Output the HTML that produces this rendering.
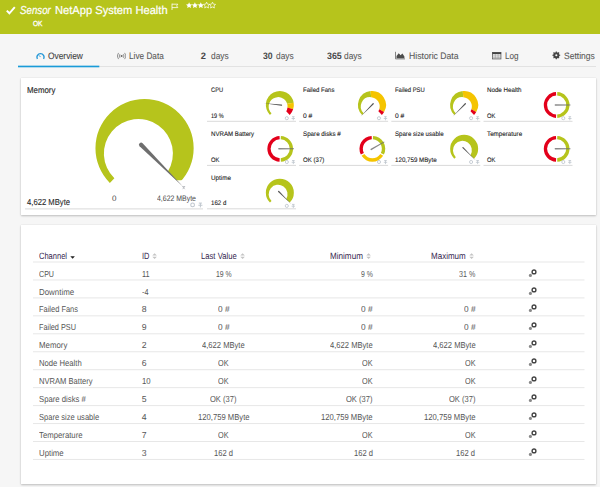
<!DOCTYPE html>
<html><head><meta charset="utf-8"><title>Sensor NetApp System Health</title>
<style>
*{box-sizing:border-box;margin:0;padding:0}
html,body{width:600px;height:487px;overflow:hidden;background:#f6f6f6;font-family:"Liberation Sans",sans-serif;color:#444}
.abs,.hdr,.panel,.hl,.rl,.t{position:absolute}
.t{line-height:1;white-space:nowrap;text-rendering:geometricPrecision;transform-origin:0 0;font-family:"Liberation Sans",sans-serif}
.hdr{left:0;top:0;width:600px;height:34px;background:#b6c41c}
.panel{background:#fff;box-shadow:0 1px 2px rgba(0,0,0,.22),0 0 1px rgba(0,0,0,.12)}
.hl{height:1px;background:#dcdcdc}
.rl{left:33px;width:551.5px;height:1px;background:#ececec}
</style></head><body>
<div class="hdr"></div>
<svg class="abs" style="left:6px;top:6px" width="10" height="9" viewBox="0 0 10 9"><path d="M0.8 4.6L3.4 7.3L8.8 1.2" fill="none" stroke="#fff" stroke-width="2"/></svg>
<div class="t" style="left:19.60px;top:6.00px;font-size:11.5px;color:#fff;transform:scaleX(0.845);font-style:italic;-webkit-text-stroke:0.2px #fff;">Sensor</div><div class="t" style="left:55.20px;top:6.00px;font-size:11.5px;color:#fff;transform:scaleX(0.968);-webkit-text-stroke:0.2px #fff;">NetApp System Health</div>
<svg class="abs" style="left:170.5px;top:3px" width="9" height="8" viewBox="0 0 9 8"><path d="M1 0.6V7M1 1.2H6.8L5.6 2.9L6.8 4.6H1" fill="none" stroke="#fff" stroke-width="0.8"/></svg>
<svg class="abs" style="left:185.6px;top:2.4px" width="32" height="8" viewBox="0 0 32 8"><path transform="translate(0.0,0)" d="M3.10 0.15L4.01 2.15L6.19 2.40L4.57 3.88L5.01 6.03L3.10 4.95L1.19 6.03L1.63 3.88L0.01 2.40L2.19 2.15Z" fill="#fff"/><path transform="translate(5.8,0)" d="M3.10 0.15L4.01 2.15L6.19 2.40L4.57 3.88L5.01 6.03L3.10 4.95L1.19 6.03L1.63 3.88L0.01 2.40L2.19 2.15Z" fill="#fff"/><path transform="translate(11.7,0)" d="M3.10 0.15L4.01 2.15L6.19 2.40L4.57 3.88L5.01 6.03L3.10 4.95L1.19 6.03L1.63 3.88L0.01 2.40L2.19 2.15Z" fill="#fff"/><path transform="translate(17.5,0)" d="M3.10 0.15L4.01 2.15L6.19 2.40L4.57 3.88L5.01 6.03L3.10 4.95L1.19 6.03L1.63 3.88L0.01 2.40L2.19 2.15Z" fill="none" stroke="#fff" stroke-width="0.7"/><path transform="translate(23.4,0)" d="M3.10 0.15L4.01 2.15L6.19 2.40L4.57 3.88L5.01 6.03L3.10 4.95L1.19 6.03L1.63 3.88L0.01 2.40L2.19 2.15Z" fill="none" stroke="#fff" stroke-width="0.7"/></svg>
<div class="t" style="left:33.10px;top:20.00px;font-size:7.4px;color:#fff;transform:scaleX(0.890);-webkit-text-stroke:0.3px #fff;">OK</div>
<div class="abs" style="left:18px;top:66.4px;width:578px;height:1px;background:#e2e2e2"></div>

<svg class="abs" style="left:35.6px;top:51.6px" width="9" height="8.1" viewBox="0 0 10 9"><path d="M1.6 7.6A3.9 3.9 0 1 1 8.4 7.6" fill="none" stroke="#2196d6" stroke-width="1.5"/><path d="M5 5.6L3.2 3.6" stroke="#2196d6" stroke-width="1"/></svg>
<svg class="abs" style="left:116.9px;top:52px" width="9.2" height="8" viewBox="0 0 10 8" preserveAspectRatio="none"><circle cx="5" cy="4" r="1.1" fill="#666"/><path d="M3.2 2.2A2.6 2.6 0 0 0 3.2 5.8M6.8 2.2A2.6 2.6 0 0 1 6.8 5.8M1.7 0.9A4.5 4.5 0 0 0 1.7 7.1M8.3 0.9A4.5 4.5 0 0 1 8.3 7.1" fill="none" stroke="#808080" stroke-width="0.9"/></svg>
<svg class="abs" style="left:395.2px;top:51.3px" width="10" height="9" viewBox="0 0 10 9"><path d="M0.5 0.8V7.9H10" fill="none" stroke="#777" stroke-width="0.9"/><path d="M1.5 7.2V5L3.7 2.2L5.6 4.3L7.4 2.6L9.4 5.4V7.2Z" fill="#4c4c4c"/></svg>
<svg class="abs" style="left:492.2px;top:51.6px" width="10" height="8" viewBox="0 0 10 8"><rect x="0.5" y="0.5" width="8.4" height="6.4" fill="none" stroke="#666" stroke-width="0.9"/><path d="M0.3 1.2H9.1" stroke="#444" stroke-width="1.9"/><path d="M0.5 3.9H9M0.5 5.4H9M3.3 2V7M6.1 2V7" stroke="#999" stroke-width="0.6"/></svg>
<svg class="abs" style="left:552.3px;top:51.3px" width="8.6" height="8.6" viewBox="0 0 9 9"><circle cx="4.5" cy="4.5" r="2.4" fill="none" stroke="#444" stroke-width="1.7"/><path d="M4.5 0.4V8.6M0.4 4.5H8.6M1.6 1.6L7.4 7.4M7.4 1.6L1.6 7.4" stroke="#444" stroke-width="1.2"/><circle cx="4.5" cy="4.5" r="1.1" fill="#f6f6f6"/></svg>
<div class="t" style="left:47.80px;top:52.00px;font-size:9.3px;color:#444;transform:scaleX(0.901);-webkit-text-stroke:0.1px #444;">Overview</div><div class="t" style="left:129.20px;top:52.00px;font-size:9.3px;color:#585858;transform:scaleX(0.886);-webkit-text-stroke:0.08px #585858;">Live Data</div><div class="t" style="left:200.70px;top:52.00px;font-size:9.3px;color:#484848;font-weight:bold;">2</div><div class="t" style="left:211.20px;top:52.00px;font-size:9.3px;color:#585858;transform:scaleX(0.896);-webkit-text-stroke:0.08px #585858;">days</div><div class="t" style="left:263.20px;top:52.00px;font-size:9.3px;color:#484848;transform:scaleX(0.928);font-weight:bold;">30</div><div class="t" style="left:276.20px;top:52.00px;font-size:9.3px;color:#585858;transform:scaleX(0.896);-webkit-text-stroke:0.08px #585858;">days</div><div class="t" style="left:326.80px;top:52.00px;font-size:9.3px;color:#484848;transform:scaleX(0.954);font-weight:bold;">365</div><div class="t" style="left:344.20px;top:52.00px;font-size:9.3px;color:#585858;transform:scaleX(0.896);-webkit-text-stroke:0.08px #585858;">days</div><div class="t" style="left:408.80px;top:52.00px;font-size:9.3px;color:#585858;transform:scaleX(0.932);-webkit-text-stroke:0.08px #585858;">Historic Data</div><div class="t" style="left:504.80px;top:52.00px;font-size:9.3px;color:#585858;transform:scaleX(0.877);-webkit-text-stroke:0.08px #585858;">Log</div><div class="t" style="left:563.80px;top:52.00px;font-size:9.3px;color:#585858;transform:scaleX(0.917);-webkit-text-stroke:0.08px #585858;">Settings</div>
<div class="panel" style="left:20.6px;top:77.5px;width:575.8px;height:137.5px"></div>
<div class="t" style="left:26.70px;top:86.00px;font-size:8.7px;color:#2b2b2b;transform:scaleX(0.905);-webkit-text-stroke:0.15px #2b2b2b;">Memory</div>
<div class="t" style="left:26.90px;top:198.00px;font-size:8.7px;color:#2b2b2b;transform:scaleX(0.882);-webkit-text-stroke:0.1px #2b2b2b;">4,622 MByte</div>
<div class="t" style="left:111.90px;top:195.00px;font-size:8px;color:#4a4a4a;">0</div>
<div class="t" style="left:156.90px;top:195.00px;font-size:8px;color:#4a4a4a;transform:scaleX(0.868);">4,622 MByte</div>

<div class="t" style="left:210.90px;top:88.00px;font-size:6.6px;color:#1a1a1a;transform:scaleX(0.868);-webkit-text-stroke:0.1px #1a1a1a;">CPU</div>
<div class="t" style="left:210.90px;top:114.00px;font-size:6.6px;color:#1a1a1a;transform:scaleX(0.842);-webkit-text-stroke:0.1px #1a1a1a;">19 %</div>
<div class="t" style="left:303.05px;top:88.00px;font-size:6.6px;color:#1a1a1a;transform:scaleX(0.912);-webkit-text-stroke:0.1px #1a1a1a;">Failed Fans</div>
<div class="t" style="left:303.05px;top:114.00px;font-size:6.6px;color:#1a1a1a;transform:scaleX(1.011);-webkit-text-stroke:0.1px #1a1a1a;">0 #</div>
<div class="t" style="left:395.20px;top:88.00px;font-size:6.6px;color:#1a1a1a;transform:scaleX(0.894);-webkit-text-stroke:0.1px #1a1a1a;">Failed PSU</div>
<div class="t" style="left:395.20px;top:114.00px;font-size:6.6px;color:#1a1a1a;transform:scaleX(1.011);-webkit-text-stroke:0.1px #1a1a1a;">0 #</div>
<div class="t" style="left:487.35px;top:88.00px;font-size:6.6px;color:#1a1a1a;transform:scaleX(0.939);-webkit-text-stroke:0.1px #1a1a1a;">Node Health</div>
<div class="t" style="left:487.35px;top:114.00px;font-size:6.6px;color:#1a1a1a;transform:scaleX(0.888);-webkit-text-stroke:0.1px #1a1a1a;">OK</div>
<div class="t" style="left:210.90px;top:132.00px;font-size:6.6px;color:#1a1a1a;transform:scaleX(0.928);-webkit-text-stroke:0.1px #1a1a1a;">NVRAM Battery</div>
<div class="t" style="left:210.90px;top:158.00px;font-size:6.6px;color:#1a1a1a;transform:scaleX(0.888);-webkit-text-stroke:0.1px #1a1a1a;">OK</div>
<div class="t" style="left:303.05px;top:132.00px;font-size:6.6px;color:#1a1a1a;transform:scaleX(0.944);-webkit-text-stroke:0.1px #1a1a1a;">Spare disks #</div>
<div class="t" style="left:303.05px;top:158.00px;font-size:6.6px;color:#1a1a1a;transform:scaleX(0.922);-webkit-text-stroke:0.1px #1a1a1a;">OK (37)</div>
<div class="t" style="left:395.20px;top:132.00px;font-size:6.6px;color:#1a1a1a;transform:scaleX(0.926);-webkit-text-stroke:0.1px #1a1a1a;">Spare size usable</div>
<div class="t" style="left:395.20px;top:158.00px;font-size:6.6px;color:#1a1a1a;transform:scaleX(0.938);-webkit-text-stroke:0.1px #1a1a1a;">120,759 MByte</div>
<div class="t" style="left:487.35px;top:132.00px;font-size:6.6px;color:#1a1a1a;transform:scaleX(0.949);-webkit-text-stroke:0.1px #1a1a1a;">Temperature</div>
<div class="t" style="left:487.35px;top:158.00px;font-size:6.6px;color:#1a1a1a;transform:scaleX(0.888);-webkit-text-stroke:0.1px #1a1a1a;">OK</div>
<div class="t" style="left:210.90px;top:176.00px;font-size:6.6px;color:#1a1a1a;transform:scaleX(0.953);-webkit-text-stroke:0.1px #1a1a1a;">Uptime</div>
<div class="t" style="left:210.90px;top:201.00px;font-size:6.6px;color:#1a1a1a;transform:scaleX(0.928);-webkit-text-stroke:0.1px #1a1a1a;">162 d</div>
<div class="panel" style="left:20.6px;top:225px;width:575.8px;height:258.5px"></div>
<svg class="abs" style="left:0;top:0" width="600" height="487" viewBox="0 0 600 487">
<clipPath id="bc"><path d="M0 0H600V180.3H150V300H0Z"/></clipPath><g clip-path="url(#bc)"><path d="M109.84 182.88A49.10 49.10 0 1 1 179.28 182.88L167.87 171.47A34.52 34.52 0 1 0 114.39 178.33Z" fill="#b6c41c"/></g>
<path d="M139.57 146.21A2.15 2.15 0 0 1 142.61 143.17L183.10 186.70L183.10 186.70Z" fill="#6e6e6e" opacity="1"/>
<circle cx="192.60" cy="204.90" r="1.86" fill="none" stroke="#bec5cd" stroke-width="1.02"/><path d="M198.84 203.10h3.12M200.40 203.10v4.32M198.36 205.26h4.08" stroke="#bec5cd" stroke-width="0.96" fill="none"/>
<path d="M182.6 186.6l2.2 2.6M184.8 186.6l-2.2 2.6M182.4 186.5h2.6" stroke="#8a8f96" stroke-width="0.5" fill="none"/>
<path d="M269.95 114.90A14.00 14.00 0 1 1 293.68 102.81L287.15 103.84A9.45 9.45 0 1 0 271.52 113.33Z" fill="#b6c41c"/>
<path d="M293.68 102.81A14.00 14.00 0 0 1 293.16 109.33L287.49 107.48A9.45 9.45 0 0 0 287.15 103.84Z" fill="#f5c400"/>
<path d="M293.16 109.33A14.00 14.00 0 0 1 289.75 114.90L286.21 111.36A9.45 9.45 0 0 0 287.49 107.48Z" fill="#e3001b"/>
<path d="M281.59 104.54A0.65 0.65 0 0 1 281.45 105.83L263.85 103.23L263.85 103.23Z" fill="#555" opacity="1"/>
<circle cx="286.80" cy="118.20" r="1.55" fill="none" stroke="#bec5cd" stroke-width="0.85"/><path d="M292.00 116.70h2.60M293.30 116.70v3.60M291.60 118.50h3.40" stroke="#bec5cd" stroke-width="0.80" fill="none"/>
<path d="M362.10 114.90A14.00 14.00 0 0 1 370.55 91.08L371.18 97.13A9.45 9.45 0 0 0 363.67 113.33Z" fill="#b6c41c"/>
<path d="M370.55 91.08A14.00 14.00 0 0 1 384.07 112.09L379.28 109.28A9.45 9.45 0 0 0 371.18 97.13Z" fill="#f5c400"/>
<path d="M384.07 112.09A14.00 14.00 0 0 1 381.90 114.90L378.36 111.36A9.45 9.45 0 0 0 379.28 109.28Z" fill="#e3001b"/>
<path d="M372.73 103.35A0.65 0.65 0 0 1 373.65 104.27L360.62 116.38L360.62 116.38Z" fill="#555" opacity="1"/>
<circle cx="378.95" cy="118.20" r="1.55" fill="none" stroke="#bec5cd" stroke-width="0.85"/><path d="M384.15 116.70h2.60M385.45 116.70v3.60M383.75 118.50h3.40" stroke="#bec5cd" stroke-width="0.80" fill="none"/>
<path d="M454.25 114.90A14.00 14.00 0 0 1 462.70 91.08L463.33 97.13A9.45 9.45 0 0 0 455.82 113.33Z" fill="#b6c41c"/>
<path d="M462.70 91.08A14.00 14.00 0 0 1 476.22 112.09L471.43 109.28A9.45 9.45 0 0 0 463.33 97.13Z" fill="#f5c400"/>
<path d="M476.22 112.09A14.00 14.00 0 0 1 474.05 114.90L470.51 111.36A9.45 9.45 0 0 0 471.43 109.28Z" fill="#e3001b"/>
<path d="M464.88 103.35A0.65 0.65 0 0 1 465.80 104.27L452.77 116.38L452.77 116.38Z" fill="#555" opacity="1"/>
<circle cx="471.10" cy="118.20" r="1.55" fill="none" stroke="#bec5cd" stroke-width="0.85"/><path d="M476.30 116.70h2.60M477.60 116.70v3.60M475.90 118.50h3.40" stroke="#bec5cd" stroke-width="0.80" fill="none"/>
<path d="M555.97 117.88A12.90 12.90 0 0 1 555.97 92.12L556.15 95.51A9.50 9.50 0 0 0 556.15 114.49Z" fill="#e3001b"/>
<path d="M557.33 92.12A12.90 12.90 0 0 1 557.33 117.88L557.15 114.49A9.50 9.50 0 0 0 557.15 95.51Z" fill="#b6c41c"/>
<path d="M555.35 105.75A0.75 0.75 0 0 1 555.35 104.25L570.43 104.55L570.43 105.45Z" fill="#6a6a6a" opacity="0.8"/>
<circle cx="563.30" cy="118.20" r="1.55" fill="none" stroke="#bec5cd" stroke-width="0.85"/><path d="M568.50 116.70h2.60M569.80 116.70v3.60M568.10 118.50h3.40" stroke="#bec5cd" stroke-width="0.80" fill="none"/>
<path d="M279.52 161.68A12.90 12.90 0 0 1 279.52 135.92L279.70 139.31A9.50 9.50 0 0 0 279.70 158.29Z" fill="#e3001b"/>
<path d="M280.88 135.92A12.90 12.90 0 0 1 280.88 161.68L280.70 158.29A9.50 9.50 0 0 0 280.70 139.31Z" fill="#b6c41c"/>
<path d="M278.90 149.55A0.75 0.75 0 0 1 278.90 148.05L293.98 148.35L293.98 149.25Z" fill="#6a6a6a" opacity="0.8"/>
<circle cx="286.85" cy="162.00" r="1.55" fill="none" stroke="#bec5cd" stroke-width="0.85"/><path d="M292.05 160.50h2.60M293.35 160.50v3.60M291.65 162.30h3.40" stroke="#bec5cd" stroke-width="0.80" fill="none"/>
<path d="M360.84 154.62A12.90 12.90 0 0 1 371.63 135.92L371.82 139.31A9.50 9.50 0 0 0 363.87 153.08Z" fill="#e3001b"/>
<path d="M373.07 135.92A12.90 12.90 0 0 1 383.86 154.62L380.83 153.08A9.50 9.50 0 0 0 372.88 139.31Z" fill="#b6c41c"/>
<path d="M383.14 155.86A12.90 12.90 0 0 1 361.56 155.86L364.40 154.00A9.50 9.50 0 0 0 380.30 154.00Z" fill="#f5c400"/>
<path d="M371.60 150.10A0.75 0.75 0 0 1 370.85 148.80L384.06 141.52L384.51 142.30Z" fill="#6a6a6a" opacity="0.8"/>
<circle cx="379.00" cy="162.00" r="1.55" fill="none" stroke="#bec5cd" stroke-width="0.85"/><path d="M384.20 160.50h2.60M385.50 160.50v3.60M383.80 162.30h3.40" stroke="#bec5cd" stroke-width="0.80" fill="none"/>
<path d="M454.25 158.70A14.00 14.00 0 1 1 474.05 158.70L470.51 155.16A9.45 9.45 0 1 0 455.82 157.13Z" fill="#b6c41c"/>
<path d="M462.50 148.07A0.65 0.65 0 0 1 463.42 147.15L475.53 160.18L475.53 160.18Z" fill="#555" opacity="1"/>
<circle cx="471.10" cy="162.00" r="1.55" fill="none" stroke="#bec5cd" stroke-width="0.85"/><path d="M476.30 160.50h2.60M477.60 160.50v3.60M475.90 162.30h3.40" stroke="#bec5cd" stroke-width="0.80" fill="none"/>
<path d="M555.97 161.68A12.90 12.90 0 0 1 555.97 135.92L556.15 139.31A9.50 9.50 0 0 0 556.15 158.29Z" fill="#e3001b"/>
<path d="M557.33 135.92A12.90 12.90 0 0 1 557.33 161.68L557.15 158.29A9.50 9.50 0 0 0 557.15 139.31Z" fill="#b6c41c"/>
<path d="M555.35 149.55A0.75 0.75 0 0 1 555.35 148.05L570.43 148.35L570.43 149.25Z" fill="#6a6a6a" opacity="0.8"/>
<circle cx="563.30" cy="162.00" r="1.55" fill="none" stroke="#bec5cd" stroke-width="0.85"/><path d="M568.50 160.50h2.60M569.80 160.50v3.60M568.10 162.30h3.40" stroke="#bec5cd" stroke-width="0.80" fill="none"/>
<path d="M269.95 202.60A14.00 14.00 0 1 1 289.75 202.60L286.21 199.06A9.45 9.45 0 1 0 271.52 201.03Z" fill="#b6c41c"/>
<path d="M278.20 191.97A0.65 0.65 0 0 1 279.12 191.05L291.23 204.08L291.23 204.08Z" fill="#555" opacity="1"/>
<circle cx="286.80" cy="205.90" r="1.55" fill="none" stroke="#bec5cd" stroke-width="0.85"/><path d="M292.00 204.40h2.60M293.30 204.40v3.60M291.60 206.20h3.40" stroke="#bec5cd" stroke-width="0.80" fill="none"/>
<rect x="207.0" y="120.80" width="89" height="1" fill="#dadada"/>
<rect x="299.1" y="120.80" width="89" height="1" fill="#dadada"/>
<rect x="391.3" y="120.80" width="89" height="1" fill="#dadada"/>
<rect x="483.5" y="120.80" width="89" height="1" fill="#dadada"/>
<rect x="207.0" y="164.90" width="89" height="1" fill="#dadada"/>
<rect x="299.1" y="164.90" width="89" height="1" fill="#dadada"/>
<rect x="391.3" y="164.90" width="89" height="1" fill="#dadada"/>
<rect x="483.5" y="164.90" width="89" height="1" fill="#dadada"/>
<rect x="207.0" y="208.30" width="89" height="1" fill="#dadada"/>
<rect x="33" y="261.50" width="551.5" height="1" fill="#e7e7e7"/>
<rect x="33" y="279.45" width="551.5" height="1" fill="#e7e7e7"/>
<rect x="33" y="297.40" width="551.5" height="1" fill="#e7e7e7"/>
<rect x="33" y="315.35" width="551.5" height="1" fill="#e7e7e7"/>
<rect x="33" y="333.30" width="551.5" height="1" fill="#e7e7e7"/>
<rect x="33" y="351.25" width="551.5" height="1" fill="#e7e7e7"/>
<rect x="33" y="369.20" width="551.5" height="1" fill="#e7e7e7"/>
<rect x="33" y="387.15" width="551.5" height="1" fill="#e7e7e7"/>
<rect x="33" y="405.10" width="551.5" height="1" fill="#e7e7e7"/>
<rect x="33" y="423.05" width="551.5" height="1" fill="#e7e7e7"/>
<rect x="33" y="441.00" width="551.5" height="1" fill="#e7e7e7"/>
<rect x="33" y="458.95" width="551.5" height="1" fill="#e7e7e7"/>
<rect x="25" y="208.4" width="178" height="1" fill="#dadada"/>
<rect x="18" y="65.65" width="81.3" height="1.65" fill="#1a9bd8"/>
</svg>
<div class="t" style="left:38.70px;top:252.00px;font-size:9.1px;color:#35264f;transform:scaleX(0.827);">Channel</div><svg class="abs" style="left:69.9px;top:256px" width="5.2" height="3" viewBox="0 0 5 3"><path d="M0.2 0.2H4.8L2.5 2.8Z" fill="#222"/></svg><div class="t" style="left:141.60px;top:252.00px;font-size:9.1px;color:#35264f;transform:scaleX(0.814);">ID</div><svg class="abs" style="left:152.0px;top:252.6px" width="5.2" height="6.2" viewBox="0 0 5 6" preserveAspectRatio="none"><path d="M0.3 2.4L2.5 0.2L4.7 2.4ZM0.3 3.6L2.5 5.8L4.7 3.6Z" fill="#c4c4c4"/></svg><div class="t" style="left:200.90px;top:252.00px;font-size:9.1px;color:#35264f;transform:scaleX(0.844);">Last Value</div><svg class="abs" style="left:239.6px;top:252.6px" width="5.2" height="6.2" viewBox="0 0 5 6" preserveAspectRatio="none"><path d="M0.3 2.4L2.5 0.2L4.7 2.4ZM0.3 3.6L2.5 5.8L4.7 3.6Z" fill="#c4c4c4"/></svg><div class="t" style="left:329.80px;top:252.00px;font-size:9.1px;color:#35264f;transform:scaleX(0.892);">Minimum</div><svg class="abs" style="left:365.8px;top:252.6px" width="5.2" height="6.2" viewBox="0 0 5 6" preserveAspectRatio="none"><path d="M0.3 2.4L2.5 0.2L4.7 2.4ZM0.3 3.6L2.5 5.8L4.7 3.6Z" fill="#c4c4c4"/></svg><div class="t" style="left:431.30px;top:252.00px;font-size:9.1px;color:#35264f;transform:scaleX(0.881);">Maximum</div><svg class="abs" style="left:468.8px;top:252.6px" width="5.2" height="6.2" viewBox="0 0 5 6" preserveAspectRatio="none"><path d="M0.3 2.4L2.5 0.2L4.7 2.4ZM0.3 3.6L2.5 5.8L4.7 3.6Z" fill="#c4c4c4"/></svg>
<div class="t" style="left:38.70px;top:270.00px;font-size:8.7px;color:#565656;transform:scaleX(0.818);">CPU</div>
<div class="t" style="left:141.70px;top:270.00px;font-size:8.7px;color:#565656;transform:scaleX(0.843);">11</div>
<div class="t" style="left:215.55px;top:270.00px;font-size:8.7px;color:#565656;transform:scaleX(0.793);">19 %</div>
<div class="t" style="left:360.60px;top:270.00px;font-size:8.7px;color:#565656;transform:scaleX(0.795);">9 %</div>
<div class="t" style="left:459.00px;top:270.00px;font-size:8.7px;color:#565656;transform:scaleX(0.823);">31 %</div>
<svg class="abs" style="left:527.85px;top:268.55px" width="10" height="9" viewBox="0 0 10 9"><circle cx="6" cy="2.9" r="1.9" fill="none" stroke="#444" stroke-width="1.4"/><circle cx="2.4" cy="6.4" r="1.55" fill="#888"/></svg>
<div class="t" style="left:38.70px;top:288.00px;font-size:8.7px;color:#565656;transform:scaleX(0.909);">Downtime</div>
<div class="t" style="left:141.70px;top:288.00px;font-size:8.7px;color:#565656;transform:scaleX(0.841);">-4</div>
<svg class="abs" style="left:527.85px;top:286.50px" width="10" height="9" viewBox="0 0 10 9"><circle cx="6" cy="2.9" r="1.9" fill="none" stroke="#444" stroke-width="1.4"/><circle cx="2.4" cy="6.4" r="1.55" fill="#888"/></svg>
<div class="t" style="left:38.70px;top:305.00px;font-size:8.7px;color:#565656;transform:scaleX(0.859);">Failed Fans</div>
<div class="t" style="left:141.70px;top:305.00px;font-size:8.7px;color:#565656;">8</div>
<div class="t" style="left:217.65px;top:305.00px;font-size:8.7px;color:#565656;transform:scaleX(0.952);">0 #</div>
<div class="t" style="left:361.00px;top:305.00px;font-size:8.7px;color:#565656;transform:scaleX(0.952);">0 #</div>
<div class="t" style="left:463.80px;top:305.00px;font-size:8.7px;color:#565656;transform:scaleX(0.952);">0 #</div>
<svg class="abs" style="left:527.85px;top:304.45px" width="10" height="9" viewBox="0 0 10 9"><circle cx="6" cy="2.9" r="1.9" fill="none" stroke="#444" stroke-width="1.4"/><circle cx="2.4" cy="6.4" r="1.55" fill="#888"/></svg>
<div class="t" style="left:38.70px;top:323.00px;font-size:8.7px;color:#565656;transform:scaleX(0.842);">Failed PSU</div>
<div class="t" style="left:141.70px;top:323.00px;font-size:8.7px;color:#565656;">9</div>
<div class="t" style="left:217.65px;top:323.00px;font-size:8.7px;color:#565656;transform:scaleX(0.952);">0 #</div>
<div class="t" style="left:361.00px;top:323.00px;font-size:8.7px;color:#565656;transform:scaleX(0.952);">0 #</div>
<div class="t" style="left:463.80px;top:323.00px;font-size:8.7px;color:#565656;transform:scaleX(0.952);">0 #</div>
<svg class="abs" style="left:527.85px;top:322.40px" width="10" height="9" viewBox="0 0 10 9"><circle cx="6" cy="2.9" r="1.9" fill="none" stroke="#444" stroke-width="1.4"/><circle cx="2.4" cy="6.4" r="1.55" fill="#888"/></svg>
<div class="t" style="left:38.70px;top:341.00px;font-size:8.7px;color:#565656;transform:scaleX(0.902);">Memory</div>
<div class="t" style="left:141.70px;top:341.00px;font-size:8.7px;color:#565656;">2</div>
<div class="t" style="left:202.05px;top:341.00px;font-size:8.7px;color:#565656;transform:scaleX(0.875);">4,622 MByte</div>
<div class="t" style="left:329.80px;top:341.00px;font-size:8.7px;color:#565656;transform:scaleX(0.875);">4,622 MByte</div>
<div class="t" style="left:432.60px;top:341.00px;font-size:8.7px;color:#565656;transform:scaleX(0.875);">4,622 MByte</div>
<svg class="abs" style="left:527.85px;top:340.35px" width="10" height="9" viewBox="0 0 10 9"><circle cx="6" cy="2.9" r="1.9" fill="none" stroke="#444" stroke-width="1.4"/><circle cx="2.4" cy="6.4" r="1.55" fill="#888"/></svg>
<div class="t" style="left:38.70px;top:359.00px;font-size:8.7px;color:#565656;transform:scaleX(0.884);">Node Health</div>
<div class="t" style="left:141.70px;top:359.00px;font-size:8.7px;color:#565656;">6</div>
<div class="t" style="left:218.15px;top:359.00px;font-size:8.7px;color:#565656;transform:scaleX(0.837);">OK</div>
<div class="t" style="left:362.00px;top:359.00px;font-size:8.7px;color:#565656;transform:scaleX(0.837);">OK</div>
<div class="t" style="left:464.80px;top:359.00px;font-size:8.7px;color:#565656;transform:scaleX(0.837);">OK</div>
<svg class="abs" style="left:527.85px;top:358.30px" width="10" height="9" viewBox="0 0 10 9"><circle cx="6" cy="2.9" r="1.9" fill="none" stroke="#444" stroke-width="1.4"/><circle cx="2.4" cy="6.4" r="1.55" fill="#888"/></svg>
<div class="t" style="left:38.70px;top:377.00px;font-size:8.7px;color:#565656;transform:scaleX(0.874);">NVRAM Battery</div>
<div class="t" style="left:141.70px;top:377.00px;font-size:8.7px;color:#565656;transform:scaleX(0.890);">10</div>
<div class="t" style="left:218.15px;top:377.00px;font-size:8.7px;color:#565656;transform:scaleX(0.837);">OK</div>
<div class="t" style="left:362.00px;top:377.00px;font-size:8.7px;color:#565656;transform:scaleX(0.837);">OK</div>
<div class="t" style="left:464.80px;top:377.00px;font-size:8.7px;color:#565656;transform:scaleX(0.837);">OK</div>
<svg class="abs" style="left:527.85px;top:376.25px" width="10" height="9" viewBox="0 0 10 9"><circle cx="6" cy="2.9" r="1.9" fill="none" stroke="#444" stroke-width="1.4"/><circle cx="2.4" cy="6.4" r="1.55" fill="#888"/></svg>
<div class="t" style="left:38.70px;top:395.00px;font-size:8.7px;color:#565656;transform:scaleX(0.889);">Spare disks #</div>
<div class="t" style="left:141.70px;top:395.00px;font-size:8.7px;color:#565656;">5</div>
<div class="t" style="left:210.20px;top:395.00px;font-size:8.7px;color:#565656;transform:scaleX(0.868);">OK (37)</div>
<div class="t" style="left:346.10px;top:395.00px;font-size:8.7px;color:#565656;transform:scaleX(0.868);">OK (37)</div>
<div class="t" style="left:448.90px;top:395.00px;font-size:8.7px;color:#565656;transform:scaleX(0.868);">OK (37)</div>
<svg class="abs" style="left:527.85px;top:394.20px" width="10" height="9" viewBox="0 0 10 9"><circle cx="6" cy="2.9" r="1.9" fill="none" stroke="#444" stroke-width="1.4"/><circle cx="2.4" cy="6.4" r="1.55" fill="#888"/></svg>
<div class="t" style="left:38.70px;top:413.00px;font-size:8.7px;color:#565656;transform:scaleX(0.872);">Spare size usable</div>
<div class="t" style="left:141.70px;top:413.00px;font-size:8.7px;color:#565656;">4</div>
<div class="t" style="left:197.60px;top:413.00px;font-size:8.7px;color:#565656;transform:scaleX(0.883);">120,759 MByte</div>
<div class="t" style="left:320.90px;top:413.00px;font-size:8.7px;color:#565656;transform:scaleX(0.883);">120,759 MByte</div>
<div class="t" style="left:423.70px;top:413.00px;font-size:8.7px;color:#565656;transform:scaleX(0.883);">120,759 MByte</div>
<svg class="abs" style="left:527.85px;top:412.15px" width="10" height="9" viewBox="0 0 10 9"><circle cx="6" cy="2.9" r="1.9" fill="none" stroke="#444" stroke-width="1.4"/><circle cx="2.4" cy="6.4" r="1.55" fill="#888"/></svg>
<div class="t" style="left:38.70px;top:431.00px;font-size:8.7px;color:#565656;transform:scaleX(0.894);">Temperature</div>
<div class="t" style="left:141.70px;top:431.00px;font-size:8.7px;color:#565656;">7</div>
<div class="t" style="left:218.15px;top:431.00px;font-size:8.7px;color:#565656;transform:scaleX(0.837);">OK</div>
<div class="t" style="left:362.00px;top:431.00px;font-size:8.7px;color:#565656;transform:scaleX(0.837);">OK</div>
<div class="t" style="left:464.80px;top:431.00px;font-size:8.7px;color:#565656;transform:scaleX(0.837);">OK</div>
<svg class="abs" style="left:527.85px;top:430.10px" width="10" height="9" viewBox="0 0 10 9"><circle cx="6" cy="2.9" r="1.9" fill="none" stroke="#444" stroke-width="1.4"/><circle cx="2.4" cy="6.4" r="1.55" fill="#888"/></svg>
<div class="t" style="left:38.70px;top:449.00px;font-size:8.7px;color:#565656;transform:scaleX(0.898);">Uptime</div>
<div class="t" style="left:141.70px;top:449.00px;font-size:8.7px;color:#565656;">3</div>
<div class="t" style="left:213.90px;top:449.00px;font-size:8.7px;color:#565656;transform:scaleX(0.874);">162 d</div>
<div class="t" style="left:353.50px;top:449.00px;font-size:8.7px;color:#565656;transform:scaleX(0.874);">162 d</div>
<div class="t" style="left:456.30px;top:449.00px;font-size:8.7px;color:#565656;transform:scaleX(0.874);">162 d</div>
<svg class="abs" style="left:527.85px;top:448.05px" width="10" height="9" viewBox="0 0 10 9"><circle cx="6" cy="2.9" r="1.9" fill="none" stroke="#444" stroke-width="1.4"/><circle cx="2.4" cy="6.4" r="1.55" fill="#888"/></svg>
</body></html>
